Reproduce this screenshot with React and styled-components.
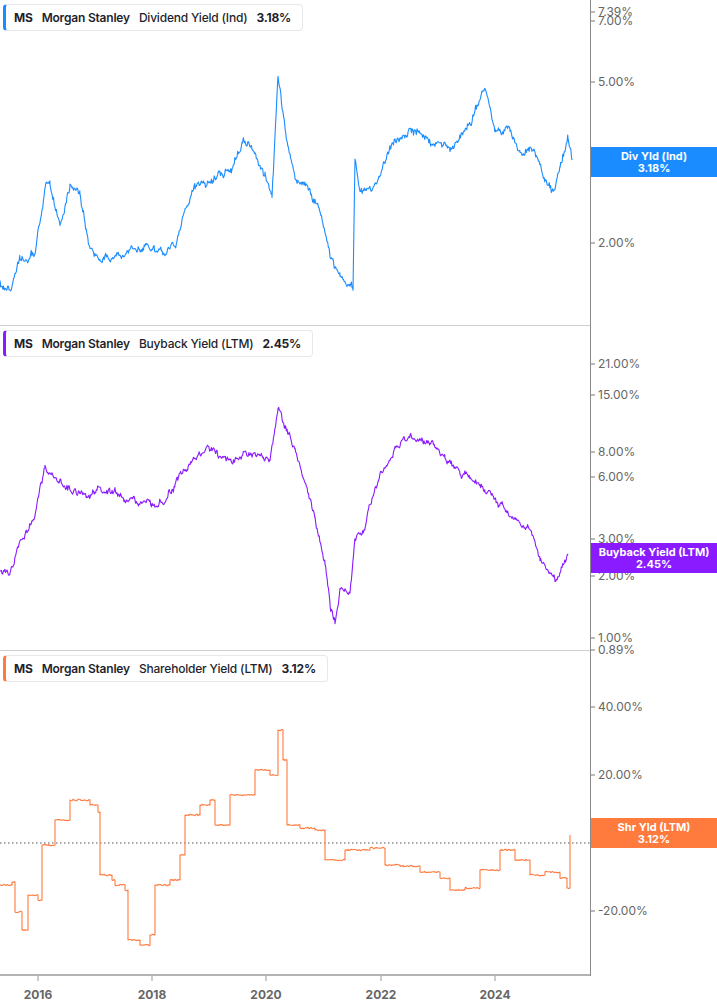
import React from "react";
import styled, { createGlobalStyle } from "styled-components";

const Global = createGlobalStyle`
  body { margin: 0; background: #fff; font-family: Inter, "Liberation Sans", sans-serif; }
`;

function rng(seed) {
  return () => {
    seed |= 0; seed = (seed + 0x6d2b79f5) | 0;
    let t = Math.imul(seed ^ (seed >>> 15), 1 | seed);
    t = (t + Math.imul(t ^ (t >>> 7), 61 | t)) ^ t;
    return ((t ^ (t >>> 14)) >>> 0) / 4294967296;
  };
}

function buildPath(kp, offset, seed, amp, step) {
  const r = rng(seed);
  let pts = [];
  if (step) {
    for (let i = 0; i < kp.length; i++) {
      const [x, y] = kp[i];
      if (i > 0) pts.push([x, kp[i - 1][1]]);
      pts.push([x, y]);
    }
    const out = [];
    for (let i = 0; i < pts.length; i++) {
      const [x0, y0] = pts[i];
      if (i > 0 && pts[i - 1][1] === y0) {
        const x1 = pts[i - 1][0];
        for (let x = x1 + 1; x < x0; x += 1) out.push([x, y0 + (r() - 0.5) * amp]);
      }
      out.push([x0, y0]);
    }
    pts = out;
  } else {
    let w = 0;
    for (let i = 1; i < kp.length; i++) {
      const [x0, y0] = kp[i - 1];
      const [x1, y1] = kp[i];
      for (let x = x0; x < x1; x += 0.7) {
        const t = (x - x0) / (x1 - x0);
        w = w * 0.85 + (r() - 0.5) * amp * 2.2;
        pts.push([x, y0 + (y1 - y0) * t + w + (r() - 0.5) * amp * 1.6]);
      }
    }
    pts.push(kp[kp.length - 1]);
  }
  return pts.map((p, i) => `${i ? "L" : "M"}${p[0].toFixed(1)},${(p[1] - offset).toFixed(1)}`).join(" ");
}

const blueKp = [[0,285],[10,295],[20,260],[35,250],[45,190],[50,185],[60,225],[70,185],[80,190],[90,250],[100,260],[120,255],[140,245],[160,255],[175,245],[185,205],[195,190],[210,180],[230,170],[245,140],[255,155],[265,175],[272,200],[278,80],[285,130],[295,175],[310,190],[320,210],[330,255],[340,270],[350,292],[353,292],[355,165],[360,190],[380,180],[390,150],[410,130],[430,140],[450,150],[470,125],[485,90],[495,130],[510,130],[520,150],[535,150],[545,185],[555,195],[560,170],[568,135],[572,160]];
const purpleKp = [[0,570],[10,575],[20,540],[35,520],[45,470],[60,480],[75,490],[90,495],[110,490],[130,500],[150,505],[165,500],[175,485],[190,465],[210,450],[230,460],[250,455],[270,460],[278,408],[285,430],[295,450],[305,480],[315,520],[325,560],[330,605],[335,620],[340,590],[350,595],[355,540],[365,525],[375,490],[385,470],[395,445],[410,435],[430,445],[445,460],[460,470],[475,480],[485,490],[500,505],[515,520],[530,530],[540,560],[555,580],[562,570],[568,555]];
const orangeKp = [[0,885],[12,882],[15,912],[22,930],[28,895],[38,900],[42,845],[55,820],[70,800],[90,805],[98,812],[100,875],[112,880],[115,885],[125,890],[128,940],[140,945],[150,935],[155,885],[170,880],[180,855],[185,815],[200,805],[210,800],[215,825],[230,795],[245,795],[255,770],[270,775],[278,730],[283,760],[287,825],[300,828],[315,830],[325,860],[345,850],[370,848],[385,865],[400,866],[420,872],[440,878],[450,890],[465,888],[480,870],[500,850],[515,860],[530,875],[545,872],[560,878],[567,888],[570,835]];

const panels = [
  {
    top: 0, h: 325, color: "#1a8cff", kp: blueKp, amp: 2.6, step: false,
    metric: "Dividend Yield (Ind)", value: "3.18%",
    ticks: [["7.39%", 12], ["7.00%", 21], ["5.00%", 82], ["3.00%", 172], ["2.00%", 243]],
    badge: ["Div Yld (Ind)", "3.18%"], badgeTop: 147,
  },
  {
    top: 326, h: 324, color: "#8a1aff", kp: purpleKp, amp: 2, step: false,
    metric: "Buyback Yield (LTM)", value: "2.45%",
    ticks: [["21.00%", 364], ["15.00%", 395], ["8.00%", 452], ["6.00%", 477], ["3.00%", 539], ["2.00%", 576], ["1.00%", 638], ["0.89%", 650]],
    badge: ["Buyback Yield (LTM)", "2.45%"], badgeTop: 543,
  },
  {
    top: 651, h: 323, color: "#ff7a3d", kp: orangeKp, amp: 1.5, step: true,
    metric: "Shareholder Yield (LTM)", value: "3.12%",
    ticks: [["40.00%", 707], ["20.00%", 775], ["0.00%", 843], ["-20.00%", 911]],
    badge: ["Shr Yld (LTM)", "3.12%"], badgeTop: 818, zero: 843,
  },
];

const Page = styled.div`
  width: 717px;
  height: 1005px;
  overflow: hidden;
  display: flex;
  flex-direction: column;
`;
const Panel = styled.div`
  position: relative;
  height: ${(p) => p.$h}px;
  display: flex;
  border-bottom: ${(p) => (p.$last ? "2px solid #b3b3b3" : "1px solid #cfcfcf")};
  width: 591px;
`;
const Chart = styled.svg`
  display: block;
  overflow: visible;
`;
const Legend = styled.div`
  position: absolute;
  left: 3px;
  top: 4px;
  height: 25px;
  display: flex;
  align-items: center;
  gap: 9px;
  padding: 0 11px 0 8px;
  background: #fff;
  border: 1px solid #e8e8e8;
  border-left: 3px solid ${(p) => p.$c};
  border-radius: 4px;
  font-size: 12px;
  letter-spacing: -0.2px;
  color: #1f1f2e;
  white-space: nowrap;
`;
const Ticker = styled.span`font-weight: 700;`;
const Name = styled.span`font-weight: 600;`;
const Metric = styled.span`font-weight: 500;`;
const Val = styled.span`font-weight: 700;`;
const Badge = styled.div`
  position: absolute;
  left: 591px;
  top: ${(p) => p.$t}px;
  width: 126px;
  height: 30px;
  background: ${(p) => p.$c};
  color: #fff;
  font-size: 11px;
  font-weight: 700;
  line-height: 12px;
  display: flex;
  flex-direction: column;
  align-items: center;
  justify-content: center;
`;
const XAxis = styled.div`
  position: relative;
  height: 29px;
  width: 591px;
`;

const years = [["2016", 38], ["2018", 152], ["2020", 266], ["2022", 381], ["2024", 495]];

export default function App() {
  return (
    <Page>
      <Global />
      {panels.map((p, i) => (
        <Panel key={i} $h={p.h} $last={i === 2}>
          <Chart width="717" height={p.h}>
            <line x1="590.5" y1="0" x2="590.5" y2={p.h + 2} stroke="#8a8a8a" strokeWidth="1" />
            {p.zero && (
              <line x1="0" y1={p.zero - p.top} x2="590" y2={p.zero - p.top} stroke="#555" strokeWidth="1" strokeDasharray="1.5 2.5" />
            )}
            {p.ticks.map(([t, y]) => (
              <g key={t}>
                <line x1="591" x2="595" y1={y - p.top} y2={y - p.top} stroke="#777" />
                <text x="598" y={y - p.top + 4} fontSize="12" fill="#666" fontFamily="Inter, Liberation Sans, sans-serif">{t}</text>
              </g>
            ))}
            <path d={buildPath(p.kp, p.top, 7 + i * 13, p.amp, p.step)} fill="none" stroke={p.color} strokeWidth="1.1" strokeLinejoin="round" />
          </Chart>
          <Legend $c={p.color}>
            <Ticker>MS</Ticker>
            <Name>Morgan Stanley</Name>
            <Metric>{p.metric}</Metric>
            <Val>{p.value}</Val>
          </Legend>
          <Badge $c={p.color} $t={p.badgeTop - p.top}>
            <span>{p.badge[0]}</span>
            <span>{p.badge[1]}</span>
          </Badge>
        </Panel>
      ))}
      <XAxis>
        <Chart width="591" height="29">
          {years.map(([y, x]) => (
            <g key={y}>
              <line x1={x} x2={x} y1="0" y2="5" stroke="#999" />
              <text x={x} y="23" textAnchor="middle" fontSize="12" fontWeight="700" fill="#666" fontFamily="Inter, Liberation Sans, sans-serif">{y}</text>
            </g>
          ))}
        </Chart>
      </XAxis>
    </Page>
  );
}
